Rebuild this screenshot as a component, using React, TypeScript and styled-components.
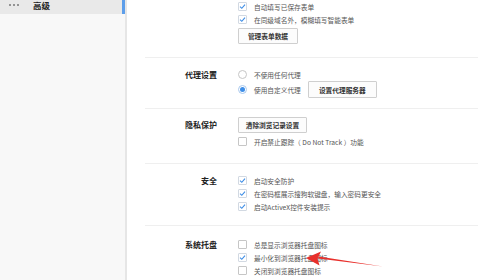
import React from "react";
import styled, { createGlobalStyle } from "styled-components";

const GlobalStyle = createGlobalStyle`
  html, body {
    margin: 0;
    padding: 0;
    background: #ffffff;
  }
  body {
    width: 478px;
    height: 280px;
    overflow: hidden;
    font-family: "Microsoft YaHei", "Noto Sans CJK SC", "Liberation Sans", sans-serif;
  }
`;

const Page = styled.div`
  position: relative;
  display: flex;
  width: 478px;
  height: 280px;
  overflow: hidden;
`;

const Sidebar = styled.div`
  width: 125px;
  flex-shrink: 0;
  background: #f8f8f8;
  border-right: 2px solid #e6e6e6;
`;

const SideItem = styled.div<{ $active?: boolean }>`
  display: flex;
  align-items: flex-start;
  box-sizing: border-box;
  height: 14px;
  padding-left: 9px;
  background: ${(p) => (p.$active ? "#e9e9e9" : "transparent")};
  border-right: 3px solid ${(p) => (p.$active ? "#5d9eea" : "transparent")};
`;

const Dots = styled.span`
  display: flex;
  gap: 2px;
  width: 24px;
  padding-top: 4px;
`;

const DotMark = styled.i`
  width: 2px;
  height: 2px;
  border-radius: 50%;
  background: #777;
`;

const SideText = styled.span`
  font-size: 8.5px;
  line-height: 11px;
  margin-top: -0.5px;
  font-weight: bold;
  color: #222;
`;

const Main = styled.div`
  flex: 1;
  padding-left: 18px;
`;

const Section = styled.div<{ $top: number; $bottom: number; $first?: boolean }>`
  display: flex;
  padding: ${(p) => `${p.$top}px 0 ${p.$bottom}px`};
  border-top: ${(p) => (p.$first ? "none" : "1px solid #efefef")};
`;

const Label = styled.div`
  width: 72px;
  flex-shrink: 0;
  text-align: right;
  font-size: 8px;
  line-height: 13px;
  font-weight: bold;
  color: #222;
`;

const Controls = styled.div`
  display: flex;
  flex-direction: column;
  align-items: flex-start;
  margin-left: 21px;
`;

const Row = styled.div<{ $h?: number }>`
  display: flex;
  align-items: center;
  height: ${(p) => p.$h ?? 13}px;
  font-size: 6.7px;
  color: #555;
  white-space: nowrap;
`;

const Box = styled.span<{ $checked?: boolean }>`
  display: inline-flex;
  align-items: center;
  justify-content: center;
  box-sizing: border-box;
  width: 9px;
  height: 9px;
  margin-right: 7px;
  border: 1px solid ${(p) => (p.$checked ? "#d2d9e2" : "#c6c6c6")};
  border-radius: 1px;
  background: #fff;
`;

const Radio = styled.span<{ $checked?: boolean }>`
  display: inline-flex;
  align-items: center;
  justify-content: center;
  box-sizing: border-box;
  width: 9px;
  height: 9px;
  margin-right: 7px;
  border: 1px solid ${(p) => (p.$checked ? "#a9c9ee" : "#c6c6c6")};
  border-radius: 50%;
  background: #fff;
`;

const Dot = styled.span`
  width: 5px;
  height: 5px;
  border-radius: 50%;
  background: #3f8fe8;
`;

const Button = styled.div<{ $w: number; $h: number }>`
  display: inline-flex;
  align-items: center;
  justify-content: center;
  box-sizing: border-box;
  width: ${(p) => p.$w}px;
  height: ${(p) => p.$h}px;
  border: 1px solid #cfcfcf;
  border-radius: 1px;
  background: #fcfcfc;
  font-size: 6.7px;
  color: #333;
  font-weight: bold;
  white-space: nowrap;
`;

const Arrow = styled.svg`
  position: absolute;
  left: 0;
  top: 0;
  pointer-events: none;
`;

const Check = () => (
  <svg width="7" height="7" viewBox="0 0 7 7">
    <path d="M1 3.6 L2.8 5.3 L6 1.6" fill="none" stroke="#3d8de6" strokeWidth="1.1" />
  </svg>
);

const CheckRow = ({ checked, text }: { checked?: boolean; text: string }) => (
  <Row>
    <Box $checked={checked}>{checked && <Check />}</Box>
    {text}
  </Row>
);

const App: React.FC = () => {
  return (
    <Page>
      <GlobalStyle />
      <Sidebar>
        <SideItem $active>
          <Dots>
            <DotMark />
            <DotMark />
            <DotMark />
          </Dots>
          <SideText>高级</SideText>
        </SideItem>
      </Sidebar>
      <Main>
        <Section $first $top={0} $bottom={13}>
          <Label />
          <Controls>
            <CheckRow checked text="自动填写已保存表单" />
            <CheckRow checked text="在同级域名外，模糊填写智能表单" />
            <Button $w={60} $h={16} style={{ marginTop: 2 }}>管理表单数据</Button>
          </Controls>
        </Section>

        <Section $top={10} $bottom={10}>
          <Label>代理设置</Label>
          <Controls>
            <Row>
              <Radio />
              不使用任何代理
            </Row>
            <Row $h={17}>
              <Radio $checked>
                <Dot />
              </Radio>
              使用自定义代理
              <Button $w={69} $h={17} style={{ marginLeft: 7 }}>设置代理服务器</Button>
            </Row>
          </Controls>
        </Section>

        <Section $top={8} $bottom={15}>
          <Label style={{ lineHeight: "16px" }}>隐私保护</Label>
          <Controls>
            <Button $w={69} $h={16}>清除浏览记录设置</Button>
            <Row style={{ marginTop: 2 }}>
              <Box />
              开启禁止跟踪（ Do Not Track ）功能
            </Row>
          </Controls>
        </Section>

        <Section $top={10} $bottom={12}>
          <Label>安全</Label>
          <Controls>
            <CheckRow checked text="启动安全防护" />
            <CheckRow checked text="在密码框展示搜狗软键盘，输入密码更安全" />
            <CheckRow checked text="启动ActiveX控件安装提示" />
          </Controls>
        </Section>

        <Section $top={12} $bottom={0}>
          <Label>系统托盘</Label>
          <Controls>
            <CheckRow text="总是显示浏览器托盘图标" />
            <CheckRow checked text="最小化到浏览器托盘图标" />
            <CheckRow text="关闭到浏览器托盘图标" />
          </Controls>
        </Section>
      </Main>

      <Arrow width="478" height="280" viewBox="0 0 478 280">
        <path d="M383 266.5 L318 258.6 L318.6 256.4 Z" fill="#e8302c" />
        <path d="M306 258 L321 251.5 L317.5 258.8 L319.5 265.5 Z" fill="#e8302c" />
      </Arrow>
    </Page>
  );
};

export default App;
